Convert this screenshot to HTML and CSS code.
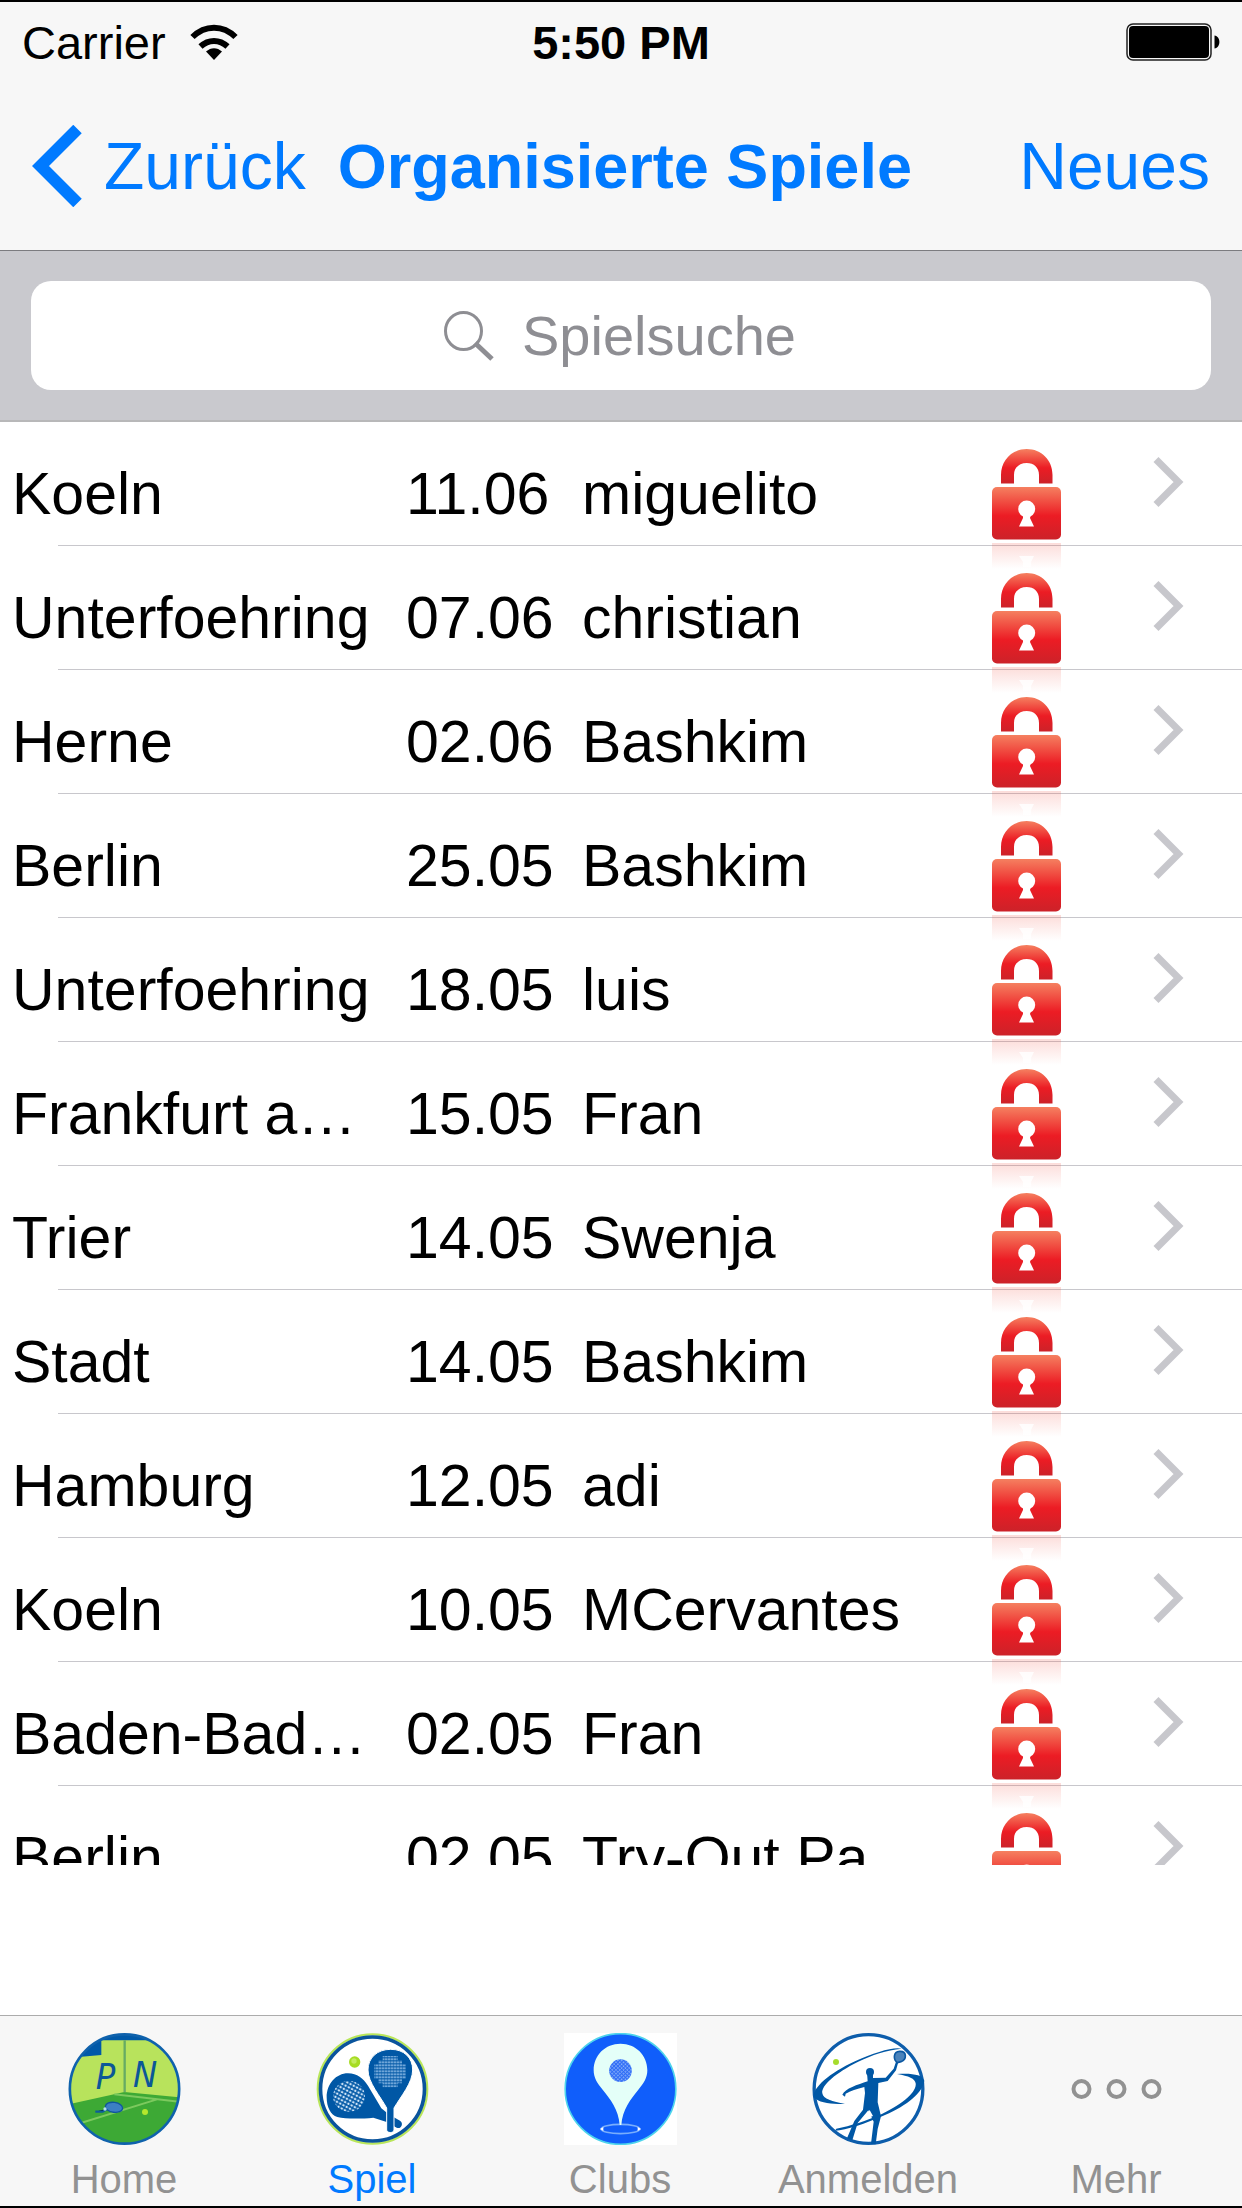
FILE: index.html
```html
<!DOCTYPE html>
<html lang="de">

<head>
	<meta charset="utf-8">
	<title>Organisierte Spiele</title>
	<meta name="viewport" content="width=device-width, initial-scale=1">
	<link rel="stylesheet" href="styles.css">
</head>

<body>
	<!-- shared icons -->
	<svg class="sprite" aria-hidden="true">
		<defs>
			<linearGradient id="red" x1="0" y1="0" x2="0" y2="1">
				<stop offset="0" stop-color="#f58060" />
				<stop offset="0.55" stop-color="#ec1c24" />
				<stop offset="1" stop-color="#cc2229" />
			</linearGradient>
			<linearGradient id="fade" x1="0" y1="0" x2="0" y2="1">
				<stop offset="0" stop-color="#f04030" stop-opacity="0.18" />
				<stop offset="1" stop-color="#f04030" stop-opacity="0" />
			</linearGradient>
			<pattern id="dots" width="9" height="9" patternUnits="userSpaceOnUse">
				<rect x="1" y="1" width="6" height="6" fill="#8dbbe6" />
			</pattern>
			<pattern id="holes" width="11" height="11" patternUnits="userSpaceOnUse" patternTransform="rotate(28)">
				<rect x="2" y="2" width="7" height="6" fill="#d5e8fa" />
			</pattern>
			<pattern id="mesh" width="8" height="8" patternUnits="userSpaceOnUse" patternTransform="rotate(45)">
				<rect width="8" height="8" fill="#2f6cf6" />
				<rect x="1" y="1" width="4" height="4" fill="#a5c8fb" />
			</pattern>
		</defs>
		<symbol id="lock" viewBox="0 0 70 92" overflow="visible">
			<path fill="url(#red)" d="M10 34.500V26C10 11 21 0 35.700 0S61.500 11 61.500 26v8.500H48V26c0-7.500-5-12-12.300-12S23 18.500 23 26v8.500z" />
			<rect x="1" y="38" width="69" height="52.500" rx="5" fill="url(#red)" />
			<circle cx="35.700" cy="60" r="8.500" fill="#fff" />
			<path fill="#fff" d="M32 65h8l-1 4 4 8.500H28l4-8.500z" />
			<rect x="1" y="94" width="69" height="26" fill="url(#fade)" />
			<path fill="#fff" opacity="0.800" d="M28 107h15l-3 6v5h-8v-5z" />
		</symbol>
		<symbol id="chevron" viewBox="0 0 31 50">
			<path fill="none" stroke="#c7c7cc" stroke-width="7" d="M3 2.500 25.500 25 3 47.500" />
		</symbol>
	</svg>

	<div class="app">
		<div class="status">
			<div class="status__carrier">
				<span>Carrier</span>
				<svg class="status__wifi" viewBox="0 0 48 36" aria-hidden="true">
					<path fill="none" stroke="#000" stroke-width="6" d="M2.500 13C15 .5 33 .5 45.500 13M10.500 22.500c8-7.500 19-7.500 27 0" />
					<path d="M24 36l-8-8.500c5-4.500 11-4.500 16 0z" />
				</svg>
			</div>
			<span class="status__time">5:50 PM</span>
			<svg class="status__battery" viewBox="0 0 94 38" aria-label="Batterie voll">
				<rect x="1" y="1" width="84" height="36" rx="6" fill="none" stroke="#222" stroke-width="1.500" />
				<rect x="3" y="3" width="80" height="32" rx="4" />
				<path d="M88.500 12.500c6.500 1 6.500 12 0 13z" />
			</svg>
		</div>

		<header class="nav">
			<a class="nav__back" href="#">
				<svg viewBox="0 0 50 82" aria-hidden="true">
					<path fill="none" stroke="#007aff" stroke-width="12" d="M45.500 4 8.500 41l37 37" />
				</svg>
				<span>Zurück</span>
			</a>
			<h1 class="nav__title">Organisierte Spiele</h1>
			<button class="nav__new" type="button">Neues</button>
		</header>

		<div class="search">
			<label class="search__field">
				<svg viewBox="0 0 50 50" aria-hidden="true">
					<ellipse cx="19.500" cy="20" rx="18" ry="18.500" fill="none" stroke="#8e8e93" stroke-width="3" />
					<path stroke="#8e8e93" stroke-width="5" d="M31 32l17 16" />
				</svg>
				<input type="text" placeholder="Spielsuche" aria-label="Spielsuche">
			</label>
		</div>

		<ul class="games">
			<li><a class="game" href="#">
				<span>Koeln</span><span>11.06</span><span>miguelito</span>
				<svg class="game__lock"><use href="#lock" /></svg><svg class="game__chevron"><use href="#chevron" /></svg>
			</a></li>
			<li><a class="game" href="#">
				<span>Unterfoehring</span><span>07.06</span><span>christian</span>
				<svg class="game__lock"><use href="#lock" /></svg><svg class="game__chevron"><use href="#chevron" /></svg>
			</a></li>
			<li><a class="game" href="#">
				<span>Herne</span><span>02.06</span><span>Bashkim</span>
				<svg class="game__lock"><use href="#lock" /></svg><svg class="game__chevron"><use href="#chevron" /></svg>
			</a></li>
			<li><a class="game" href="#">
				<span>Berlin</span><span>25.05</span><span>Bashkim</span>
				<svg class="game__lock"><use href="#lock" /></svg><svg class="game__chevron"><use href="#chevron" /></svg>
			</a></li>
			<li><a class="game" href="#">
				<span>Unterfoehring</span><span>18.05</span><span>luis</span>
				<svg class="game__lock"><use href="#lock" /></svg><svg class="game__chevron"><use href="#chevron" /></svg>
			</a></li>
			<li><a class="game" href="#">
				<span>Frankfurt a…</span><span>15.05</span><span>Fran</span>
				<svg class="game__lock"><use href="#lock" /></svg><svg class="game__chevron"><use href="#chevron" /></svg>
			</a></li>
			<li><a class="game" href="#">
				<span>Trier</span><span>14.05</span><span>Swenja</span>
				<svg class="game__lock"><use href="#lock" /></svg><svg class="game__chevron"><use href="#chevron" /></svg>
			</a></li>
			<li><a class="game" href="#">
				<span>Stadt</span><span>14.05</span><span>Bashkim</span>
				<svg class="game__lock"><use href="#lock" /></svg><svg class="game__chevron"><use href="#chevron" /></svg>
			</a></li>
			<li><a class="game" href="#">
				<span>Hamburg</span><span>12.05</span><span>adi</span>
				<svg class="game__lock"><use href="#lock" /></svg><svg class="game__chevron"><use href="#chevron" /></svg>
			</a></li>
			<li><a class="game" href="#">
				<span>Koeln</span><span>10.05</span><span>MCervantes</span>
				<svg class="game__lock"><use href="#lock" /></svg><svg class="game__chevron"><use href="#chevron" /></svg>
			</a></li>
			<li><a class="game" href="#">
				<span>Baden-Bad…</span><span>02.05</span><span>Fran</span>
				<svg class="game__lock"><use href="#lock" /></svg><svg class="game__chevron"><use href="#chevron" /></svg>
			</a></li>
			<li><a class="game" href="#">
				<span>Berlin</span><span>02.05</span><span>Try-Out Pa…</span>
				<svg class="game__lock"><use href="#lock" /></svg><svg class="game__chevron"><use href="#chevron" /></svg>
			</a></li>
		</ul>

		<nav class="tabs">
			<a class="tab" href="#">
				<svg viewBox="51 69 339 336" aria-hidden="true">
					<clipPath id="court"><circle cx="220.500" cy="237" r="163" /></clipPath>
					<g clip-path="url(#court)">
						<rect x="51" y="69" width="339" height="336" fill="#b8e35c" />
						<path fill="#0059a8" d="M51 69h339v22H151v44l-100 9z" />
						<path fill="#3da935" d="M51 283l169-37 170 16v143H51z" />
						<path stroke="#67ab63" stroke-width="7" d="M221 91v156" />
						<path fill="none" stroke="#7cc95e" stroke-width="6" d="M190 253l200 23M80 342l238-74" />
						<path stroke="#0d5d9b" stroke-width="7" d="M133 305h22l14-9" />
						<ellipse cx="189" cy="292" rx="26" ry="15" fill="#3c7fc4" stroke="#0f559e" stroke-width="4" transform="rotate(8 189 292)" />
						<circle cx="162" cy="297" r="5" fill="#b5dff0" />
						<circle cx="282" cy="306" r="9" fill="#b4e72d" />
					</g>
					<text class="tab__letter" x="134" y="238">P</text>
					<text class="tab__letter" x="246" y="232">N</text>
					<circle cx="220.500" cy="237" r="164" fill="none" stroke="#0f62ac" stroke-width="8" />
				</svg>
				<span>Home</span>
			</a>
			<a class="tab tab--active" href="#">
				<svg viewBox="46 69 339 336" aria-hidden="true">
					<circle cx="215.500" cy="237" r="164" fill="#fff" stroke="#b9e65a" stroke-width="7" />
					<circle cx="215.500" cy="237" r="156" fill="none" stroke="#0a549c" stroke-width="11" />
					<circle cx="162" cy="156" r="17" fill="#a7dc24" />
					<circle cx="160" cy="153" r="8" fill="#c3ec62" />
					<path fill="#0057a5" d="M78 262c0-40 28-72 64-72 28 0 45 15 60 37l40 68 22 18 34 19c12 7 4 27-10 21l-30-17-40-13c-38 4-84 4-108-2-20-5-32-30-32-59z" />
					<path fill="#0057a5" stroke="#fff" stroke-width="3" d="M202 180c0-37 28-62 68-62s66 25 66 62c0 38-36 80-56 114v66c0 10-22 10-22 0v-66c-18-34-56-76-56-114z" />
					<ellipse cx="145" cy="259" rx="48" ry="46" fill="url(#holes)" />
					<path fill="url(#dots)" d="M246 138h45v13h13v12h12v44h-12v13h-13v12h-45v-12h-13v-13h-12v-44h12v-12h13z" />
				</svg>
				<span>Spiel</span>
			</a>
			<a class="tab" href="#">
				<svg viewBox="42 69 339 336" aria-hidden="true">
					<rect x="42" y="69" width="339" height="336" fill="#fff" />
					<circle cx="211.500" cy="237" r="166" fill="#105efb" stroke="#4dd4ec" stroke-width="5" />
					<ellipse cx="211.500" cy="357" rx="58" ry="14" fill="none" stroke="#79aefc" stroke-width="5" />
					<path fill="#fff" d="M150 357l10-6v12zM273 357l-10-6v12z" />
					<path fill="#e4fff8" d="M209 345c-3-46-29-79-51-106-16-19-27-35-27-58 0-46 35-80 80.500-80s80.500 34 80.500 80c0 23-11 39-27 58-22 27-48 60-51 106z" />
					<circle cx="211.500" cy="182" r="34" fill="url(#mesh)" />
				</svg>
				<span>Clubs</span>
			</a>
			<a class="tab" href="#">
				<svg viewBox="51 69 339 336" aria-hidden="true">
					<circle cx="220.500" cy="237" r="163" fill="#fff" stroke="#0d5dab" stroke-width="10" />
					<g fill="#0057a5">
						<path d="M56 262c-2-30 46-72 124-108 60-28 118-45 140-38-46 5-88 18-132 40-64 32-110 70-106 94 2 16 30 26 68 31-38 3-78-2-94-19z" />
						<path d="M388 212c-4 34-50 74-118 103-60 26-116 46-150 47l4-6c44-9 88-23 138-45 64-30 104-66 100-91-2-14-20-22-56-28 46-3 76 2 82 20z" />
						<circle cx="225" cy="186" r="12" />
						<path d="M216 188h18v16l38-1 24-27 8-24 6 4-7 25-25 32-28 6-2 58 10 42-10 38-6 46-14-2 8-66-16-34-32 38-16 52-16-6 22-52 26-34 6-50-2-18c-22 6-42 12-56 20l-2 9-8-6c8-18 46-30 76-40z" />
						<path fill="#fff" d="M224 300l-20 28 20-6 10-4z" />
					</g>
					<path fill="#4b83bb" stroke="#0c58a2" stroke-width="5" d="M308 158c-14-8-14-33 6-34 22-1 22 24 4 31z" />
					<circle cx="123" cy="156" r="9" fill="#a6dc2c" />
				</svg>
				<span>Anmelden</span>
			</a>
			<a class="tab" href="#">
				<svg viewBox="0 0 112 112" aria-hidden="true">
					<g fill="none" stroke="#929292" stroke-width="4">
						<circle cx="21" cy="56" r="8" />
						<circle cx="56" cy="56" r="8" />
						<circle cx="91" cy="56" r="8" />
					</g>
				</svg>
				<span>Mehr</span>
			</a>
		</nav>
	</div>
</body>

</html>
```

FILE: styles.css
```css
* {
	box-sizing: border-box;
}

body {
	margin: 0;
	font-family: 'Liberation Sans', Arial, Helvetica, sans-serif;
	color: #000;
	background-color: #fff;
}

a {
	color: inherit;
	text-decoration: none;
}

svg {
	display: block;
	flex: none;
}

.sprite {
	position: absolute;
	width: 0;
	height: 0;
}

.app {
	display: flex;
	flex-direction: column;
	height: 100vh;
	border-top: 2px solid #000;
	border-bottom: 2px solid #000;
}

/* status bar */

.status {
	display: grid;
	grid-template-columns: 1fr auto 1fr;
	align-items: center;
	flex: none;
	height: 80px;
	padding: 0 22px;
	font-size: 47px;
	background-color: #f7f7f7;
}

.status__carrier {
	display: flex;
	align-items: center;
	gap: 24px;
}

.status__wifi {
	width: 48px;
	height: 36px;
}

.status__time {
	font-weight: 700;
}

.status__battery {
	justify-self: end;
	width: 94px;
	height: 38px;
}

/* navigation */

.nav {
	display: flex;
	align-items: center;
	flex: none;
	height: 169px;
	padding: 0 32px;
	color: #007aff;
	font-size: 66px;
	background-color: #f7f7f7;
	border-bottom: 1px solid #7c7c80;
}

.nav__back {
	display: flex;
	align-items: center;
	gap: 22px;
}

.nav__back svg {
	width: 50px;
	height: 82px;
}

.nav__title {
	margin: 0 0 0 32px;
	font-size: 63px;
}

.nav__new {
	margin-left: auto;
	padding: 0;
	border: 0;
	background: none;
	color: inherit;
	font: inherit;
}

/* search */

.search {
	flex: none;
	padding: 30px 31px;
	background-color: #c9c9ce;
	border-bottom: 2px solid #b8b8b9;
}

.search__field {
	display: flex;
	align-items: center;
	justify-content: center;
	gap: 28px;
	height: 109px;
	border-radius: 20px;
	background-color: #fff;
}

.search__field svg {
	width: 50px;
	height: 50px;
}

.search__field input {
	width: 276px;
	padding: 0;
	border: 0;
	outline: 0;
	background: none;
	font-family: inherit;
	font-size: 56px;
}

.search__field input::placeholder {
	color: #8e8e93;
}

/* list of games */

.games {
	flex: 1 1 0;
	min-height: 0;
	margin: 0 0 150px;
	padding: 0;
	overflow: hidden;
	list-style: none;
}

.game {
	display: grid;
	grid-template-columns: 394px 176px 1fr 162px 31px;
	align-items: center;
	height: 124px;
	padding: 0 58px 0 12px;
	font-size: 59px;
	white-space: nowrap;
	background: linear-gradient(#c8c7cc, #c8c7cc) 58px 100% / 100% 1px no-repeat;
}

.game span {
	padding-top: 20px;
}

.game__lock {
	align-self: end;
	width: 70px;
	height: 92px;
	margin-bottom: 5px;
	overflow: visible;
}

.game__chevron {
	width: 31px;
	height: 50px;
	margin-bottom: 4px;
}

/* tab bar */

.tabs {
	display: grid;
	grid-template-columns: repeat(5, 1fr);
	flex: none;
	padding: 17px 2px 5px 0;
	background-color: #f7f7f7;
	border-top: 1px solid #acacac;
}

.tab {
	display: flex;
	flex-direction: column;
	align-items: center;
	gap: 12px;
	color: #929292;
	font-size: 40px;
	line-height: 44px;
}

.tab--active {
	color: #007aff;
}

.tab svg {
	width: 113px;
	height: 112px;
}

.tab__letter {
	fill: #0b5798;
	font-family: 'DejaVu Sans Condensed', 'DejaVu Sans', sans-serif;
	font-size: 108px;
	font-style: italic;
}
```
